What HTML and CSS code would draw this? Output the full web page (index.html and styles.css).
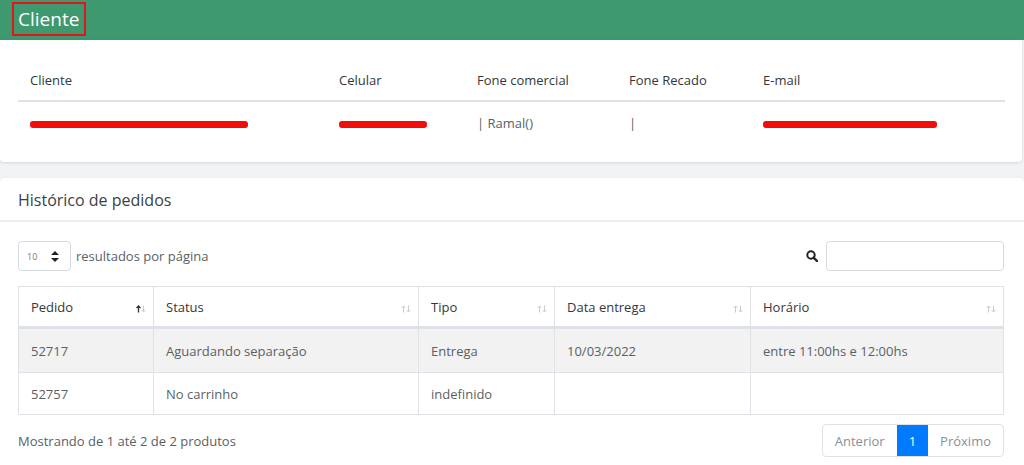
FILE: index.html
```html
<!DOCTYPE html>
<html lang="pt-BR">
<head>
    <meta charset="UTF-8">
    <meta name="viewport" content="width=device-width, initial-scale=1.0">
    <title>Cliente</title>
    <link rel="stylesheet" href="styles.css">
</head>
<body>
    <div class="topbar">
        <h2 class="page-title">Cliente</h2>
    </div>

    <div class="card client-card">
        <table class="client-table">
            <thead>
                <tr>
                    <th class="c-nome">Cliente</th>
                    <th class="c-cel">Celular</th>
                    <th class="c-com">Fone comercial</th>
                    <th class="c-rec">Fone Recado</th>
                    <th>E-mail</th>
                </tr>
            </thead>
            <tbody>
                <tr>
                    <td><span class="redacted" style="width:218px">nataly.automato@compararpreco.br</span></td>
                    <td><span class="redacted" style="width:88px">(11)99877-0123</span></td>
                    <td>| Ramal()</td>
                    <td>|</td>
                    <td><span class="redacted" style="width:174px">nataly.viscomar@gmail.com</span></td>
                </tr>
            </tbody>
        </table>
    </div>

    <div class="card orders-card">
        <div class="card-header">Histórico de pedidos</div>
        <div class="card-body">
            <div class="toolbar">
                <div class="length">
                    <div class="select">
                        <span>10</span>
                        <svg width="8" height="11" viewBox="0 0 8 11"><path d="M4 0 L8 4 H0 Z M0 7 H8 L4 11 Z" fill="#222"/></svg>
                    </div>
                    resultados por página
                </div>
                <div class="search">
                    <svg width="12" height="12" viewBox="0 0 12 12"><circle cx="5" cy="5" r="3.7" fill="none" stroke="#222" stroke-width="2"/><path d="M7.6 7.6 L11 11" stroke="#222" stroke-width="2.4" stroke-linecap="round"/></svg>
                    <input type="text">
                </div>
            </div>

            <table class="orders">
                <thead>
                    <tr>
                        <th class="o-ped">Pedido <svg class="sort" width="10" height="8" viewBox="0 0 10 8"><path d="M2.5 7.5V1 M0.5 3 L2.5 1 L4.5 3" stroke="#333" stroke-width="1.3" fill="none"/><path d="M7.5 0.5V7 M5.5 5 L7.5 7 L9.5 5" stroke="#c9cdd1" stroke-width="1" fill="none"/></svg></th>
                        <th class="o-sta">Status <svg class="sort" width="10" height="8" viewBox="0 0 10 8"><path d="M2.5 7.5V1 M0.5 3 L2.5 1 L4.5 3" stroke="#c9cdd1" stroke-width="1" fill="none"/><path d="M7.5 0.5V7 M5.5 5 L7.5 7 L9.5 5" stroke="#c9cdd1" stroke-width="1" fill="none"/></svg></th>
                        <th class="o-tip">Tipo <svg class="sort" width="10" height="8" viewBox="0 0 10 8"><path d="M2.5 7.5V1 M0.5 3 L2.5 1 L4.5 3" stroke="#c9cdd1" stroke-width="1" fill="none"/><path d="M7.5 0.5V7 M5.5 5 L7.5 7 L9.5 5" stroke="#c9cdd1" stroke-width="1" fill="none"/></svg></th>
                        <th class="o-dat">Data entrega <svg class="sort" width="10" height="8" viewBox="0 0 10 8"><path d="M2.5 7.5V1 M0.5 3 L2.5 1 L4.5 3" stroke="#c9cdd1" stroke-width="1" fill="none"/><path d="M7.5 0.5V7 M5.5 5 L7.5 7 L9.5 5" stroke="#c9cdd1" stroke-width="1" fill="none"/></svg></th>
                        <th>Horário <svg class="sort" width="10" height="8" viewBox="0 0 10 8"><path d="M2.5 7.5V1 M0.5 3 L2.5 1 L4.5 3" stroke="#c9cdd1" stroke-width="1" fill="none"/><path d="M7.5 0.5V7 M5.5 5 L7.5 7 L9.5 5" stroke="#c9cdd1" stroke-width="1" fill="none"/></svg></th>
                    </tr>
                </thead>
                <tbody>
                    <tr class="odd">
                        <td>52717</td>
                        <td>Aguardando separação</td>
                        <td>Entrega</td>
                        <td>10/03/2022</td>
                        <td>entre 11:00hs e 12:00hs</td>
                    </tr>
                    <tr>
                        <td>52757</td>
                        <td>No carrinho</td>
                        <td>indefinido</td>
                        <td></td>
                        <td></td>
                    </tr>
                </tbody>
            </table>

            <div class="footer">
                <div class="info">Mostrando de 1 até 2 de 2 produtos</div>
                <div class="pager">
                    <span class="pg">Anterior</span>
                    <span class="pg current">1</span>
                    <span class="pg">Próximo</span>
                </div>
            </div>
        </div>
    </div>
</body>
</html>
```

FILE: styles.css
```css
*{
    margin: 0;
    padding: 0;
    box-sizing: border-box;
}
body{
    background-color: #f2f3f6;
    font-family: "Open Sans", "Liberation Sans", sans-serif;
    color: #5a5f66;
    font-size: 13px;
    height: 465px;
    overflow: hidden;
}
.topbar{
    height: 40px;
    background-color: #3e9970;
    padding: 2px 12px;
}
.page-title{
    display: inline-block;
    border: 2px solid #e5141b;
    color: #fff;
    font-weight: 400;
    font-size: 19px;
    line-height: 30px;
    padding: 0 5px 0 4px;
    height: 34px;
}
.card{
    background: #fff;
    box-shadow: 0 1px 3px rgba(0,0,0,0.13);
}
.client-card{
    margin-right: 2px;
    border-radius: 0 0 4px 4px;
    padding: 31px 18px 0 18px;
    height: 122px;
}
.client-table{
    width: 987px;
    border-collapse: collapse;
}
.client-table th{
    text-align: left;
    font-weight: 400;
    color: #33373d;
    padding: 0 12px 11px 12px;
    border-bottom: 2px solid #dee2e6;
    font-size: 13px;
}
.client-table td{
    padding: 12px 12px;
    color: #5a5f66;
    white-space: nowrap;
}
.c-nome{ width: 309px; }
.c-cel{ width: 138px; }
.c-com{ width: 152px; }
.c-rec{ width: 134px; }
.redacted{
    display: inline-block;
    height: 7px;
    background: #f20d0d;
    border-radius: 3px;
    vertical-align: middle;
    color: transparent;
    overflow: hidden;
    font-size: 1px;
}
.orders-card{
    margin-top: 16px;
    border-radius: 4px 4px 0 0;
    height: 287px;
    overflow: hidden;
}
.card-header{
    font-size: 16px;
    color: #3a3f45;
    padding: 11px 18px 9px;
    border-bottom: 2px solid #eceef1;
    line-height: 22px;
}
.card-body{
    padding: 19px 20px 0 18px;
}
.toolbar{
    display: flex;
    justify-content: space-between;
    align-items: center;
    height: 30px;
}
.length{
    display: flex;
    align-items: center;
    gap: 5px;
    color: #5a5f66;
}
.select{
    width: 53px;
    height: 30px;
    border: 1px solid #d6d9de;
    border-radius: 4px;
    display: flex;
    align-items: center;
    justify-content: space-between;
    padding: 0 11px 0 8px;
    font-size: 9px;
    color: #777;
}
.search{
    display: flex;
    align-items: center;
    gap: 8px;
}
.search input{
    width: 178px;
    height: 30px;
    border: 1px solid #d6d9de;
    border-radius: 4px;
    outline: none;
}
.orders{
    width: 986px;
    margin-top: 15px;
    border-collapse: collapse;
    border: 1px solid #dee2e6;
}
.orders th{
    text-align: left;
    font-weight: 400;
    color: #33373d;
    height: 41px;
    padding: 0 12px;
    border-left: 1px solid #dee2e6;
    border-bottom: 3px solid #dee2e6;
    position: relative;
}
.orders td{
    height: 42px;
    padding: 0 12px;
    border: 1px solid #dee2e6;
    color: #5a5f66;
}
.orders .odd td{
    height: 45px;
    background: #f2f2f2;
}
.o-ped{ width: 135px; }
.o-sta{ width: 265px; }
.o-tip{ width: 136px; }
.o-dat{ width: 196px; }
.sort{
    position: absolute;
    right: 7px;
    top: 18px;
}
.footer{
    display: flex;
    justify-content: space-between;
    align-items: center;
    margin-top: 9px;
}
.info{
    color: #5a5f66;
}
.pager{
    display: flex;
    border: 1px solid #dee2e6;
    border-radius: 4px;
    height: 33px;
    overflow: hidden;
}
.pg{
    display: flex;
    align-items: center;
    padding: 0 12px;
    color: #8a8f96;
}
.pg.current{
    background: #007bff;
    color: #fff;
    padding: 0 12px;
}
```
